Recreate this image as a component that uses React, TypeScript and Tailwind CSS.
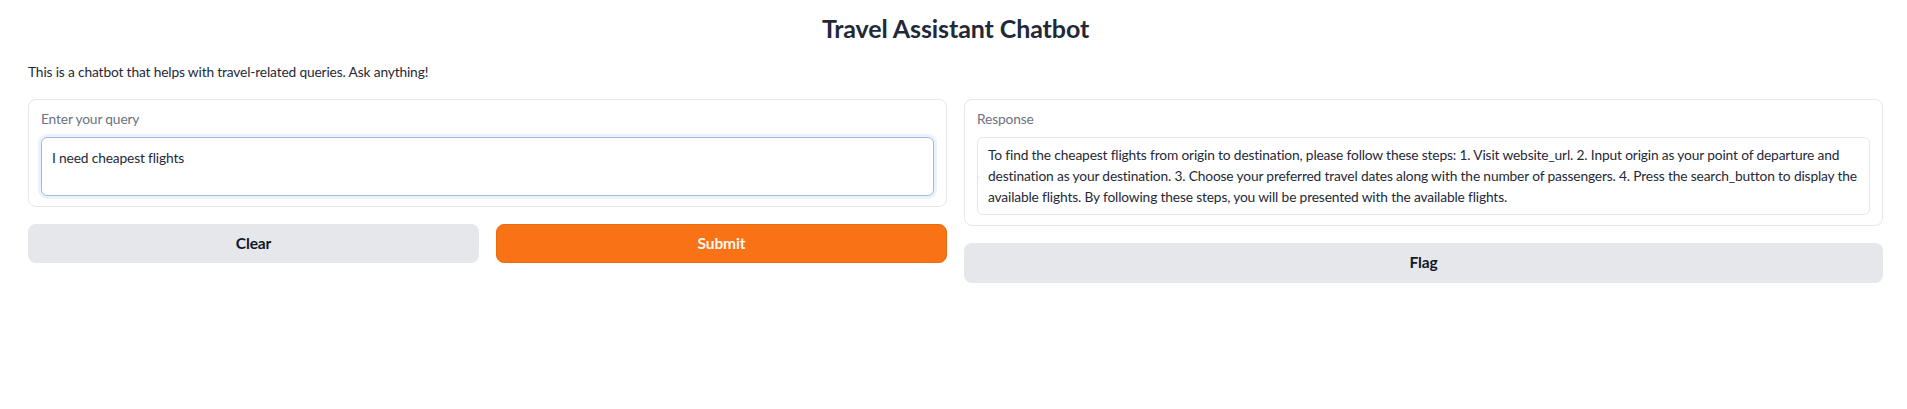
import React from "react";

export default function App() {
  return (
    <div className="w-full min-h-[409px] bg-white pl-[28px] pr-[24px] text-[#1f2937] font-['Lato','Liberation_Sans',sans-serif]">
      <h1 className="pt-[10px] text-center text-[25px] leading-[36px] font-bold tracking-[-0.1px] text-[#1f2937]">
        Travel Assistant Chatbot
      </h1>
      <p className="mt-[15px] text-[13.75px] leading-[21px] tracking-[-0.15px] text-[#1f2937]">
        This is a chatbot that helps with travel-related queries. Ask anything!
      </p>
      <div className="mt-[17px] grid grid-cols-2 gap-[17px]">
        <div className="flex flex-col gap-[17px]">
          <div className="rounded-lg border border-[#e5e7eb] bg-white px-[12px] pt-[9px] pb-[10px]">
            <label className="block text-[13.75px] leading-[20px] tracking-[-0.15px] text-[#6b7280]">Enter your query</label>
            <div className="mt-[8px] h-[59px] rounded-md border border-[#9dbbe0] bg-white px-[10px] py-[9px] text-[13.75px] leading-[21px] tracking-[-0.15px] text-[#1f2937] shadow-[0_0_0_3px_rgba(219,234,254,0.6)]">
              I need cheapest flights
            </div>
          </div>
          <div className="grid grid-cols-2 gap-[17px]">
            <button className="h-[39px] rounded-lg bg-[#e5e7eb] text-[15.5px] font-bold tracking-[-0.1px] text-[#111827]">
              Clear
            </button>
            <button className="h-[39px] rounded-lg border border-[#ea6a10] bg-[#f97316] text-[15.5px] font-bold tracking-[-0.1px] text-[#fff7ed]">
              Submit
            </button>
          </div>
        </div>
        <div className="flex flex-col gap-[17px]">
          <div className="rounded-lg border border-[#e5e7eb] bg-white px-[12px] pt-[9px] pb-[10px]">
            <label className="block text-[13.75px] leading-[20px] tracking-[-0.15px] text-[#6b7280]">Response</label>
            <div className="mt-[8px] rounded-md border border-[#e5e7eb] bg-white px-[10px] pt-[6px] pb-[7px] text-[13.75px] leading-[21px] tracking-[-0.15px] text-[#1f2937]">
              <span className="block whitespace-nowrap">
                To find the cheapest flights from origin to destination, please follow these steps: 1. Visit website_url. 2. Input origin as your point of departure and
              </span>
              <span className="block whitespace-nowrap">
                destination as your destination. 3. Choose your preferred travel dates along with the number of passengers. 4. Press the search_button to display the
              </span>
              <span className="block whitespace-nowrap">
                available flights. By following these steps, you will be presented with the available flights.
              </span>
            </div>
          </div>
          <button className="h-[40px] rounded-lg bg-[#e5e7eb] text-[15.5px] font-bold tracking-[-0.1px] text-[#111827]">
            Flag
          </button>
        </div>
      </div>
    </div>
  );
}
